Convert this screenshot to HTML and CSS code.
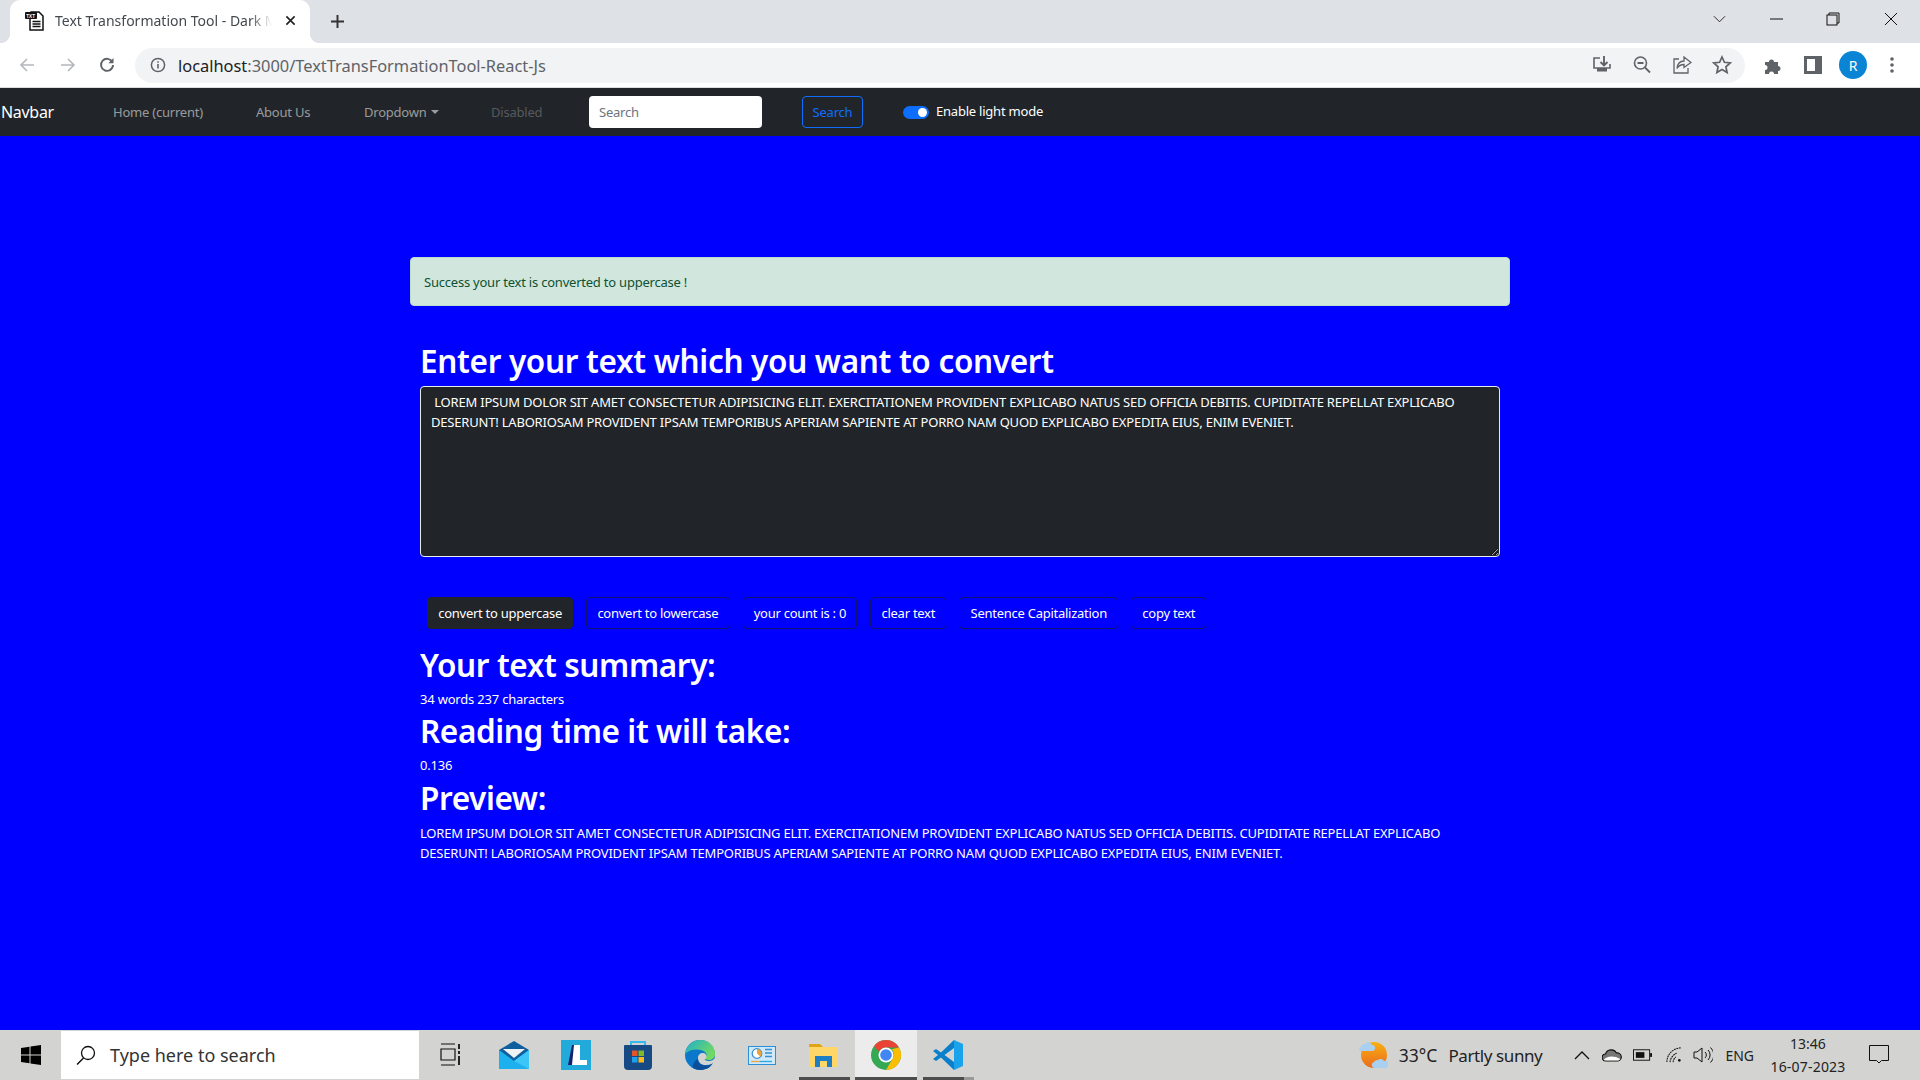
FILE: index.html
```html
<!DOCTYPE html>
<html lang="en">
<head>
<meta charset="utf-8">
<title>Text Transformation Tool - Dark Mode</title>
<link rel="stylesheet" href="styles.css">
</head>
<body>
<div class="screen">
  <div class="tabstrip">
    <div class="tab">
      <svg class="favicon" viewBox="0 0 20 20"><path d="M6 1h8l4 4v14H5V8z" fill="#fff" stroke="#111" stroke-width="1.500"/><rect x="0" y="1" width="12" height="7" rx="1" fill="#111"/><text x="1.300" y="6.500" class="fav-text">TXT</text><path d="M7.500 10.500h8M7.500 13h8M7.500 15.500h8" stroke="#111" stroke-width="1.300"/></svg>
      <span class="tab-title">Text Transformation Tool - Dark Mode</span>
      <svg class="tab-x" viewBox="0 0 12 12"><path d="M1.500 1.500l9 9M10.500 1.500l-9 9" stroke="#222" stroke-width="1.800"/></svg>
    </div>
    <svg class="newtab" viewBox="0 0 16 16"><path d="M8 0v16M0 8h16" stroke="#333" stroke-width="2.400"/></svg>
    <div class="strip-fill"></div>
    <div class="winctl">
      <svg class="w-chev" viewBox="0 0 14 8"><path d="M1 1l6 6 6-6" fill="none" stroke="#222" stroke-width="1"/></svg>
      <svg class="w-min" viewBox="0 0 14 14"><path d="M0 7h13" stroke="#111" stroke-width="1"/></svg>
      <svg class="w-max" viewBox="0 0 14 14"><path d="M3 3V1h10v10h-2" fill="none" stroke="#111"/><rect x="1" y="3" width="10" height="10" fill="none" stroke="#111"/></svg>
      <svg class="w-close" viewBox="0 0 14 14"><path d="M1 1l12 12M13 1L1 13" stroke="#111" stroke-width="1"/></svg>
    </div>
  </div>
  <div class="toolbar">
    <svg class="nav-ic" viewBox="0 0 16 16"><path d="M15 8H2M8 2L2 8l6 6" fill="none" stroke="#b4b7bb" stroke-width="1.600"/></svg>
    <svg class="nav-ic" viewBox="0 0 16 16"><path d="M1 8h13M8 2l6 6-6 6" fill="none" stroke="#b4b7bb" stroke-width="1.600"/></svg>
    <svg class="nav-ic" viewBox="0 0 16 16"><path d="M13.400 5.200A6 6 0 1 0 14 8" fill="none" stroke="#5f6368" stroke-width="1.900"/><path d="M14.500 1v5.200H9.300z" fill="#5f6368"/></svg>
    <div class="omnibox">
      <svg class="info" viewBox="0 0 16 16"><circle cx="8" cy="8" r="6.600" fill="none" stroke="#5f6368" stroke-width="1.500"/><path d="M8 7v4.600M8 4.200v1.600" stroke="#5f6368" stroke-width="1.600"/></svg>
      <span class="url"><span class="url-host">localhost</span>:3000/TextTransFormationTool-React-Js</span>
      <span class="omni-fill"></span>
      <svg class="omni-ic" viewBox="0 0 20 20"><path d="M8 3H2v10h16V9" fill="none" stroke="#5f6368" stroke-width="1.600"/><path d="M12 1v9M8.500 7l3.500 3.500L15.500 7" fill="none" stroke="#5f6368" stroke-width="1.900"/><path d="M5 13h10v3.500H5z" fill="#5f6368"/></svg>
      <svg class="omni-ic" viewBox="0 0 20 20"><circle cx="8.500" cy="8" r="6" fill="none" stroke="#5f6368" stroke-width="1.600"/><path d="M5.500 8h6M13 12.500l5 5" stroke="#5f6368" stroke-width="1.800"/></svg>
      <svg class="omni-ic" viewBox="0 0 20 20"><path d="M7 4H2v14h14v-5" fill="none" stroke="#5f6368" stroke-width="1.300"/><path d="M12 2l7 5.500-7 5V9.500c-3.500 0-5.500 1.500-7 4 .5-4.500 3-7.500 7-7.500z" fill="none" stroke="#5f6368" stroke-width="1.300"/></svg>
      <svg class="omni-ic" viewBox="0 0 20 20"><path d="M10 2l2.400 5.300 5.800.6-4.300 3.900 1.200 5.700L10 14.600l-5.100 2.900 1.200-5.700L1.800 7.900l5.800-.6z" fill="none" stroke="#5f6368" stroke-width="1.700"/></svg>
    </div>
    <svg class="tool-ic puzzle" viewBox="0 0 20 20"><path d="M2 7h4a2.500 2.500 0 1 1 5 0h4v4a2.500 2.500 0 1 1 0 5v3h-4a2.500 2.500 0 1 0-5 0H2v-4a2.500 2.500 0 1 0 0-5z" fill="#5f6368"/></svg>
    <svg class="tool-ic side" viewBox="0 0 18 18"><path fill-rule="evenodd" d="M0 0h18v18H0zM3 3v12h8V3z" fill="#5f6368"/></svg>
    <span class="avatar">R</span>
    <svg class="tool-ic dots" viewBox="0 0 4 18"><circle cx="2" cy="3" r="1.800" fill="#5f6368"/><circle cx="2" cy="9" r="1.800" fill="#5f6368"/><circle cx="2" cy="15" r="1.800" fill="#5f6368"/></svg>
  </div>
  <nav class="navbar">
    <a class="brand">Navbar</a>
    <a class="nav-link link-home">Home (current)</a>
    <a class="nav-link link-about">About Us</a>
    <a class="nav-link link-drop">Dropdown<i class="caret"></i></a>
    <a class="nav-link link-off">Disabled</a>
    <input class="search-input" placeholder="Search">
    <button class="search-btn">Search</button>
    <span class="switch"><i class="knob"></i></span>
    <label class="switch-label">Enable light mode</label>
  </nav>
  <main class="page">
    <div class="container">
      <div class="alert">Success your text is converted to uppercase !</div>
      <div class="inner">
        <h1>Enter your text which you want to convert</h1>
        <textarea class="box" spellcheck="false"> LOREM IPSUM DOLOR SIT AMET CONSECTETUR ADIPISICING ELIT. EXERCITATIONEM PROVIDENT EXPLICABO NATUS SED OFFICIA DEBITIS. CUPIDITATE REPELLAT EXPLICABO DESERUNT! LABORIOSAM PROVIDENT IPSAM TEMPORIBUS APERIAM SAPIENTE AT PORRO NAM QUOD EXPLICABO EXPEDITA EIUS, ENIM EVENIET.</textarea>
        <div class="actions">
          <button class="btn btn-active">convert to uppercase</button>
          <button class="btn">convert to lowercase</button>
          <button class="btn">your count is : 0</button>
          <button class="btn">clear text</button>
          <button class="btn">Sentence Capitalization</button>
          <button class="btn">copy text</button>
        </div>
        <h2>Your text summary:</h2>
        <p>34 words 237 characters</p>
        <h2>Reading time it will take:</h2>
        <p>0.136</p>
        <h2 class="preview-title">Preview:</h2>
        <p class="preview-text">LOREM IPSUM DOLOR SIT AMET CONSECTETUR ADIPISICING ELIT. EXERCITATIONEM PROVIDENT EXPLICABO NATUS SED OFFICIA DEBITIS. CUPIDITATE REPELLAT EXPLICABO DESERUNT! LABORIOSAM PROVIDENT IPSAM TEMPORIBUS APERIAM SAPIENTE AT PORRO NAM QUOD EXPLICABO EXPEDITA EIUS, ENIM EVENIET.</p>
      </div>
    </div>
  </main>
  <footer class="taskbar">
    <div class="start"><svg viewBox="0 0 20 20"><path d="M0 3l8.500-1.200V9.500H0zM9.500 1.600L20 0v9.500H9.500zM0 10.500h8.500v7.700L0 17zM9.500 10.500H20V20L9.500 18.400z" fill="#000"/></svg></div>
    <div class="tb-search">
      <svg viewBox="0 0 20 20"><circle cx="12" cy="8" r="6.500" fill="none" stroke="#111" stroke-width="1.300"/><path d="M7.500 13L1 19.500" stroke="#111" stroke-width="1.500"/></svg>
      <span>Type here to search</span>
    </div>
    <div class="tb-slot"><svg viewBox="0 0 20 24" class="ic-view"><path d="M1 1h14M1 6h14v11H1zM1 22h14" fill="none" stroke="#111" stroke-width="1.200"/><path d="M19 1v5M19 8v3M19 13v9" stroke="#111" stroke-width="1.800"/></svg></div>
    <div class="tb-slot tb-mail"><svg viewBox="0 0 30 28" class="ic-mail"><path d="M15 0l15 9v19H0V9z" fill="#0f5e9e"/><path d="M4 8h22l-11 9z" fill="#eef2f5"/><path d="M0 9l15 11 15-11v19H0z" fill="#1cb0ee"/><path d="M15 20L30 9v19z" fill="#3bc6f7"/></svg></div>
    <div class="tb-slot"><svg viewBox="0 0 30 30" class="ic-box"><rect width="30" height="30" fill="#22aadb"/><path d="M7 25l4-20h3l-1 15-2 5z" fill="#12246e"/><path d="M13 5h6v15h7v5H11z" fill="#fff"/></svg></div>
    <div class="tb-slot"><svg viewBox="0 0 30 30" class="ic-box"><path d="M8 6V2h14v4" fill="none" stroke="#36b7ee" stroke-width="2"/><path d="M2 5h26a1 1 0 0 1 1 1v20a4 4 0 0 1-4 4H5a4 4 0 0 1-4-4V6a1 1 0 0 1 1-1z" fill="#174a85"/><rect x="9" y="10.500" width="5.500" height="5.500" fill="#e8542a"/><rect x="15.500" y="10.500" width="5.500" height="5.500" fill="#7db82a"/><rect x="9" y="17" width="5.500" height="5.500" fill="#1ea1ec"/><rect x="15.500" y="17" width="5.500" height="5.500" fill="#fbb81a"/></svg></div>
    <div class="tb-slot"><svg viewBox="0 0 30 30" class="ic-box"><defs><linearGradient id="eg" x1="0" y1="0" x2="1" y2="0.600"><stop offset="0" stop-color="#1fb0cc"/><stop offset="1" stop-color="#74da5e"/></linearGradient></defs><circle cx="15" cy="15" r="15" fill="#0c78cc"/><path d="M0 14C2 5 8 0 15 0c9 0 15 6 15 14 0 4-3 6-6 6-2.500 0-4.500-1-4.500-2 2-1 3-3 1-5.500C17 8.500 5 8 0 14z" fill="url(#eg)"/><path d="M13 18c0-3 2-5 5-5 2 0 3 1 3.500 3 .5 2-1 3-2 3.500 1.500 1 3 1.500 5 1.500 2 0 4-1 5.500-3 0 2-.5 4-2.500 6-6 2-14.500 2-14.500-6z" fill="#d3d3d1"/><path d="M13 19c0 6 8 9 15 4-3 5-7 7-13 7-3 0-5-1-7-2-1-3 1-7 5-9z" fill="#0b4f9a"/></svg></div>
    <div class="tb-slot"><svg viewBox="0 0 28 19" class="ic-cp"><rect x=".5" y=".5" width="27" height="18" fill="#cfe8fa" stroke="#2a8fd8"/><circle cx="9" cy="7.500" r="4.800" fill="#fff" stroke="#3a8fd0" stroke-width="1.200"/><path d="M9 2.700a4.800 4.800 0 0 1 3.500 8L9 7.500z" fill="#e8a33a"/><path d="M17 3.500h7M17 7h7M17 10.500h7" stroke="#3a8fd0" stroke-width="1.500"/><path d="M3 15.500h9" stroke="#e8a33a" stroke-width="1.300"/><path d="M12 15.500h12" stroke="#2aa9e8" stroke-width="1.300"/></svg></div>
    <div class="tb-slot tb-open"><svg viewBox="0 0 29 23" class="ic-folder"><path d="M1 0h10l3 3v3H0V1a1 1 0 0 1 1-1z" fill="#e0a514"/><path d="M0 3h29v20H0z" fill="#ffd769"/><path d="M6 12h17v11h-5v-6h-7v6H6z" fill="#1f7fc4"/></svg></div>
    <div class="tb-slot tb-chrome tb-open"><svg viewBox="0 0 36 36" class="ic-box"><circle cx="18" cy="18" r="18" fill="#34a853"/><path d="M18 0a18 18 0 0 1 15.600 9H18a9 9 0 0 0-8 5L3.500 7.500A18 18 0 0 1 18 0z" fill="#ea4335"/><path d="M33.600 9A18 18 0 0 1 18 36l7.800-13.500A9 9 0 0 0 25 11z" fill="#fbbc04"/><circle cx="18" cy="18" r="9" fill="#fff"/><circle cx="18" cy="18" r="7" fill="#4285f4"/></svg></div>
    <div class="tb-slot tb-open tb-split"><svg viewBox="0 0 30 30" class="ic-box"><path d="M21 0L8 12.500 3 9 0 11l5 4-5 4 3 2 5-3.500L21 30v-8l-9.500-7L21 8z" fill="#0b7fc9"/><path d="M21 0l9 4v22l-9 4z" fill="#1aa3ea"/></svg></div>
    <div class="tb-fill"></div>
    <svg class="weather" viewBox="0 0 30 28"><defs><linearGradient id="sg" x1="0" y1="0" x2="0" y2="1"><stop offset="0" stop-color="#f9b013"/><stop offset="1" stop-color="#ea6a1c"/></linearGradient></defs><circle cx="16" cy="14" r="13" fill="url(#sg)"/><path d="M1 9a3 3 0 0 1 2-3 4 4 0 0 1 4-3 4 4 0 0 1 7 1 3 3 0 0 1 3 3 3 3 0 0 1-2 3H3a2.500 2.500 0 0 1-2-1z" fill="#a9d0f0"/><path d="M14 25a3 3 0 0 1 2-4 4 4 0 0 1 4-2 4 4 0 0 1 6 1 3 3 0 0 1 4 4 3 3 0 0 1-2 3H16a2.500 2.500 0 0 1-2-2z" fill="#a9d0f0"/></svg>
    <span class="tb-temp">33°C</span>
    <span class="tb-cond">Partly sunny</span>
    <svg class="tray tray-chev" viewBox="0 0 16 10"><path d="M1 9l7-7 7 7" fill="none" stroke="#111" stroke-width="1.300"/></svg>
    <svg class="tray tray-cloud" viewBox="0 0 20 14"><path d="M4 13a3.500 3.500 0 0 1-.5-7A6 6 0 0 1 14.500 5 4 4 0 0 1 16 13z" fill="#777" stroke="#111" stroke-width="1.100"/><path d="M1.500 12c3-4 10-5 17-1l-2 1.500H4z" fill="#fff"/></svg>
    <svg class="tray tray-batt" viewBox="0 0 20 12"><rect x=".5" y=".5" width="17" height="11" fill="none" stroke="#111"/><rect x="3" y="3" width="9" height="6" fill="#111"/><rect x="18" y="4" width="2" height="4" fill="#111"/></svg>
    <svg class="tray tray-wifi" viewBox="0 0 18 18"><path d="M1 17a16 16 0 0 1 16-16M4.500 17A12.500 12.500 0 0 1 12 7M8 17a9 9 0 0 1 3-6" fill="none" stroke="#111" stroke-width="1.200" stroke-dasharray="2 .8"/><circle cx="15" cy="15" r="1.500" fill="#111"/></svg>
    <svg class="tray tray-vol" viewBox="0 0 20 18"><path d="M1 6h3l5-4v14l-5-4H1z" fill="none" stroke="#111"/><path d="M12 6a4 4 0 0 1 0 6M15 4a7 7 0 0 1 0 10M17.500 1.500a10 10 0 0 1 0 15" fill="none" stroke="#111"/></svg>
    <span class="tb-lang">ENG</span>
    <span class="tb-clock"><span>13:46</span><span class="tb-date">16-07-2023</span></span>
    <svg class="tb-notif" viewBox="0 0 20 20"><path d="M.5.500h19v15h-7l-2.500 2.500-2.500-2.500h-7z" fill="none" stroke="#111"/></svg>
  </footer>
</div>
</body>
</html>
```
FILE: styles.css
```css
* { box-sizing: border-box; }
html, body { margin: 0; padding: 0; }
body { font-family: "Noto Sans", "Open Sans", sans-serif; }
.screen { width: 1920px; height: 1080px; display: flex; flex-direction: column; overflow: hidden; background: #0000ff; }

/* browser chrome */
.tabstrip { height: 43px; background: #dee1e6; display: flex; align-items: center; flex: none; }
.tab { position: relative; margin-left: 10px; width: 300px; height: 43px; background: #fff; border-radius: 10px 10px 0 0; display: flex; align-items: center; padding: 0 12px 2px 15px; }
.tab::before, .tab::after { content: ""; position: absolute; bottom: 0; width: 10px; height: 10px; }
.tab::before { left: -10px; background: radial-gradient(circle at 0 0, transparent 10px, #fff 10.500px); }
.tab::after { right: -10px; background: radial-gradient(circle at 100% 0, transparent 10px, #fff 10.500px); }
.favicon { width: 20px; height: 20px; flex: none; }
.fav-text { font: 700 4.600px "Liberation Sans", sans-serif; fill: #fff; }
.tab-title { margin-left: 10px; font-size: 14px; color: #45494e; white-space: nowrap; overflow: hidden; width: 217px; flex: none; -webkit-mask-image: linear-gradient(90deg, #000 90%, transparent); mask-image: linear-gradient(90deg, #000 90%, transparent); }
.tab-x { width: 11px; height: 11px; margin-left: 13px; flex: none; }
.newtab { width: 13px; height: 13px; margin-left: 21px; }
.strip-fill { flex: 1; }
.winctl { display: flex; align-items: center; height: 37px; margin-top: -6px; }
.w-chev { width: 13px; height: 8px; margin-right: 44px; }
.w-min { width: 14px; height: 14px; margin-right: 42px; }
.w-max { width: 14px; height: 14px; margin-right: 44px; }
.w-close { width: 14px; height: 14px; margin-right: 22px; }

.toolbar { height: 45px; background: #fff; display: flex; align-items: center; flex: none; padding-left: 19px; border-bottom: 1px solid #dadce0; }
.nav-ic { width: 16px; height: 16px; margin-right: 24.500px; }
.nav-ic:nth-of-type(3) { margin-right: 0; margin-left: -1px; }
.omnibox { margin-left: 20px; width: 1610px; height: 35px; background: #f1f3f4; border-radius: 18px; display: flex; align-items: center; padding-left: 15px; padding-right: 13px; }
.info { width: 16px; height: 16px; flex: none; }
.url { margin-left: 12px; font-size: 16.400px; color: #5f6368; white-space: nowrap; }
.url-host { color: #202124; }
.omni-fill { flex: 1; }
.omni-ic { width: 20px; height: 20px; margin-left: 20px; flex: none; }
.tool-ic { flex: none; }
.puzzle { width: 20px; height: 20px; margin-left: 18px; }
.side { width: 18px; height: 18px; margin-left: 21px; }
.avatar { width: 28px; height: 28px; border-radius: 50%; background: #0a84d4; color: #fff; font-size: 14px; display: flex; align-items: center; justify-content: center; margin-left: 17px; flex: none; }
.dots { width: 4px; height: 18px; margin-left: 23px; }

/* navbar */
.navbar { height: 48px; background: #212529; display: flex; align-items: center; flex: none; }
.brand { font-size: 16px; letter-spacing: -.3px; color: #fff; margin-left: 1px; width: 112px; }
.nav-link { font-size: 13px; letter-spacing: -.22px; color: rgba(255,255,255,.55); white-space: nowrap; }
.link-home { width: 143px; }
.link-about { width: 108px; }
.link-drop { width: 127px; }
.link-off { width: 98px; color: rgba(255,255,255,.25); }
.caret { display: inline-block; margin-left: 4px; vertical-align: 3px; border-top: 4px solid; border-left: 4px solid transparent; border-right: 4px solid transparent; }
.search-input { width: 173px; height: 32px; border: 0; border-radius: 4px; padding: 0 10px; font: 13px "Noto Sans", sans-serif; letter-spacing: -.22px; background: #fff; }
.search-input::placeholder { color: #6c757d; }
.search-btn { margin-left: 40px; width: 61px; height: 32px; border: 1px solid #0d6efd; border-radius: 4px; background: transparent; color: #0d6efd; font: 13px "Noto Sans", sans-serif; letter-spacing: -.22px; padding: 0; }
.switch { margin-left: 40px; width: 26px; height: 13px; border-radius: 7px; background: #0d6efd; display: flex; justify-content: flex-end; align-items: center; padding-right: 2px; }
.knob { width: 9px; height: 9px; border-radius: 50%; background: #fff; display: block; }
.switch-label { margin-left: 7px; font-size: 13px; letter-spacing: -.22px; color: #fff; white-space: nowrap; position: relative; top: -1px; }

/* page */
.page { flex: 1; color: #fff; }
.container { width: 1100px; margin: 121px auto 0; }
.alert { height: 49px; background: #d1e7dd; border: 1px solid #badbcc; border-radius: 4px; color: #0f5132; font-size: 13px; letter-spacing: -.22px; line-height: 49px; padding-left: 13px; }
.inner { padding: 0 10px; }
h1 { margin: 32px 0 0; font-size: 31.500px; font-weight: 600; letter-spacing: -.31px; line-height: 46px; }
.box { display: block; width: 1080px; height: 171px; margin: 2px 0 0; background: #212529; color: #fff; color-scheme: dark; border: 1px solid #e9ecef; border-radius: 4px; padding: 5px 10px; font: 13px/20px "Noto Sans", sans-serif; letter-spacing: -.2px; outline: none; }
.actions { display: flex; margin: 40px 0 0 7px; gap: 13px; }
.btn { height: 32px; padding: 0 10.200px; border: 1px solid #14146e; border-radius: 4px; background: transparent; color: #fff; font: 13px "Noto Sans", sans-serif; letter-spacing: -.26px; white-space: nowrap; }
.btn-active { background: #212529; border-color: #212529; }
h2 { margin: 0; font-size: 31.500px; font-weight: 600; letter-spacing: -.38px; line-height: 40px; }
.actions + h2 { margin-top: 16px; }
p { margin: 0; font-size: 13px; letter-spacing: -.2px; line-height: 20px; }
p + h2 { margin-top: 2px; }
h2 + p { margin-top: 4px; }
p + .preview-title { margin-top: 3px; }
h2 + .preview-text { margin-top: 4.500px; line-height: 20.500px; }

/* taskbar */
.taskbar { height: 50px; background: #d3d3d1; display: flex; align-items: center; flex: none; }
.start { width: 61px; display: flex; justify-content: center; }
.start svg { width: 20px; height: 20px; }
.tb-search { width: 358px; height: 48px; background: #fff; display: flex; align-items: center; padding-left: 15px; align-self: flex-end; margin-bottom: 1px; }
.tb-search svg { width: 20px; height: 20px; flex: none; }
.tb-search span { margin-left: 14px; font-size: 18px; color: #333; }
.tb-slot { width: 62px; height: 50px; display: flex; align-items: center; justify-content: center; flex: none; position: relative; }
.tb-mail { margin-left: 1.500px; }
.ic-view { width: 20px; height: 24px; }
.ic-mail { width: 30px; height: 28px; }
.ic-box { width: 30px; height: 30px; }
.ic-cp { width: 28px; height: 19px; }
.ic-folder { width: 29px; height: 23px; }
.tb-open::after { content: ""; position: absolute; left: 6px; right: 5px; bottom: 0; height: 3px; background: #4d4d4d; }
.tb-chrome { background: #ececec; }
.tb-chrome::after { left: 0; right: 0; }
.tb-split::after { background: linear-gradient(90deg, #4d4d4d 80%, #999 80%); }
.tb-fill { flex: 1; }
.weather { width: 30px; height: 28px; flex: none; }
.tb-temp { margin-left: 11px; font-size: 17.500px; color: #222; white-space: nowrap; }
.tb-cond { margin-left: 11px; font-size: 17px; letter-spacing: -.4px; color: #222; white-space: nowrap; }
.tray { flex: none; }
.tray-chev { width: 16px; height: 10px; margin-left: 32px; }
.tray-cloud { width: 20px; height: 14px; margin-left: 12px; }
.tray-batt { width: 19px; height: 12px; margin-left: 11px; }
.tray-wifi { width: 16px; height: 16px; margin-left: 14px; }
.tray-vol { width: 20px; height: 18px; margin-left: 11px; }
.tb-lang { margin-left: 12px; font-size: 14px; color: #222; }
.tb-clock { margin-left: 16px; width: 76px; display: flex; flex-direction: column; align-items: center; font-size: 14px; line-height: 23px; color: #222; }
.tb-date { letter-spacing: .2px; }
.tb-notif { width: 20px; height: 20px; margin-left: 23px; margin-right: 31px; flex: none; }
```
